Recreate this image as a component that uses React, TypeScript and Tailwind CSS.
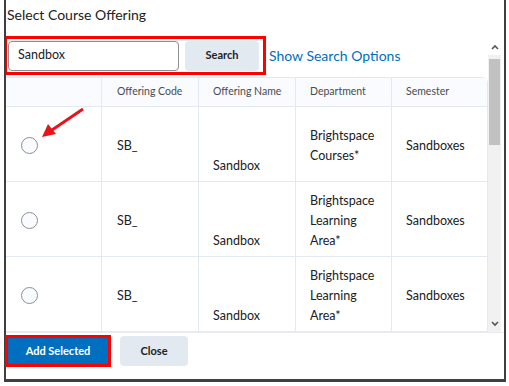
import React from 'react';

type Row = { dept: string[] };

const rows: Row[] = [
  { dept: ['Brightspace', 'Courses*'] },
  { dept: ['Brightspace', 'Learning', 'Area*'] },
  { dept: ['Brightspace', 'Learning', 'Area*'] },
];

const Chevron: React.FC<{ up?: boolean }> = ({ up }) => (
  <svg width="8" height="6" viewBox="0 0 8 6" className="block">
    <path
      d={up ? 'M1 5 L4 2 L7 5' : 'M1 1 L4 4 L7 1'}
      fill="none"
      stroke="#555"
      strokeWidth="1.6"
    />
  </svg>
);

const Radio: React.FC = () => (
  <div className="w-[17px] h-[17px] rounded-full border border-[#8a8f93] bg-[#f9fbff]" />
);

export default function App() {
  return (
    <div className="w-[509px] h-[386px] bg-white font-['Lato',sans-serif] text-[#202122]">
      <div className="ml-[4px] w-[502px] h-[382px] border-l-2 border-r-2 border-b-[3px] border-[#3f3f3f] flex flex-col">
        {/* title */}
        <div className="h-[36px] pl-[1px] pt-[5px] text-[14px] leading-[20px] shrink-0">
          Select Course Offering
        </div>

        {/* scroll area */}
        <div className="h-[297px] flex shrink-0 border-b border-[#e8ebef]">
          <div className="w-[482px] flex flex-col overflow-hidden">
            <div className="h-[41px] shrink-0 flex items-start">
              <div className="-ml-[2px] w-[262px] h-[39px] border-[3px] border-[#f00] flex items-center pl-[1px] gap-[6px]">
                <div className="w-[171px] h-[30px] rounded-[4px] border border-[#8a8f93] flex items-center pl-[9px] text-[12.5px]">
                  Sandbox
                </div>
                <div className="w-[74px] h-[30px] rounded-[4px] bg-[#e3e9f1] flex items-center justify-center text-[11px] font-bold">
                  Search
                </div>
              </div>
              <div className="ml-[3px] h-[39px] flex items-center text-[14px] text-[#006fbf]">
                Show Search Options
              </div>
            </div>

            <div className="border border-[#e3e9f1] rounded-tr-[6px] -ml-[1px]">
              <div className="h-[29px] grid grid-cols-[96px_97px_97px_96px_95px] bg-[#f9fbff] text-[10.5px] text-[#494c4e] border-b border-[#e3e9f1]">
                <div className="border-r border-[#e3e9f1]" />
                <div className="border-r border-[#e3e9f1] flex items-center pl-[15px]">Offering Code</div>
                <div className="border-r border-[#e3e9f1] flex items-center pl-[14px]">Offering Name</div>
                <div className="border-r border-[#e3e9f1] flex items-center pl-[14px]">Department</div>
                <div className="flex items-center pl-[14px]">Semester</div>
              </div>
              {rows.map((r, i) => (
                <div
                  key={i}
                  className="h-[75px] grid grid-cols-[96px_97px_97px_96px_95px] text-[12.5px] leading-[20px] border-b border-[#e3e9f1]"
                >
                  <div className="border-r border-[#e3e9f1] flex items-center pl-[15px] pt-[3px]">
                    <Radio />
                  </div>
                  <div className="border-r border-[#e3e9f1] flex items-center pl-[15px] pt-[3px]">SB_</div>
                  <div className="border-r border-[#e3e9f1] flex items-center pl-[14px] pt-[44px]">Sandbox</div>
                  <div className="border-r border-[#e3e9f1] flex flex-col justify-center pl-[14px] pt-[4px]">
                    {r.dept.map((d, j) => (
                      <div key={j}>{d}</div>
                    ))}
                  </div>
                  <div className="flex items-center pl-[14px] pt-[4px]">Sandboxes</div>
                </div>
              ))}
            </div>
          </div>

          {/* scrollbar */}
          <div className="w-[13px] flex flex-col">
            <div className="h-[19px] pt-[8px] flex justify-center">
              <Chevron up />
            </div>
            <div className="flex-1 bg-[#f1f1f1] flex flex-col px-[1px]">
              <div className="mt-[4px] h-[86px] bg-[#c1c1c1]" />
            </div>
            <div className="h-[16px] bg-[#f1f1f1] flex items-center justify-center">
              <Chevron />
            </div>
          </div>
        </div>

        {/* footer */}
        <div className="flex items-start pt-[2px]">
          <div className="-ml-[1px] w-[106px] h-[32px] border-[3px] border-[#f00]">
            <div className="h-full bg-[#006fbf] flex items-center justify-center text-white text-[11px] font-bold">
              Add Selected
            </div>
          </div>
          <div className="ml-[9px] mt-[1px] w-[68px] h-[30px] rounded-[4px] bg-[#e3e9f1] flex items-center justify-center text-[11px] font-bold">
            Close
          </div>
        </div>
      </div>

      {/* annotation arrow */}
      <svg className="absolute left-0 top-0 pointer-events-none" width="509" height="386">
        <line x1="83" y1="109" x2="52" y2="130" stroke="#e8141b" strokeWidth="3" />
        <polygon points="42,137 48,124 56,134" fill="#e8141b" />
      </svg>
    </div>
  );
}
